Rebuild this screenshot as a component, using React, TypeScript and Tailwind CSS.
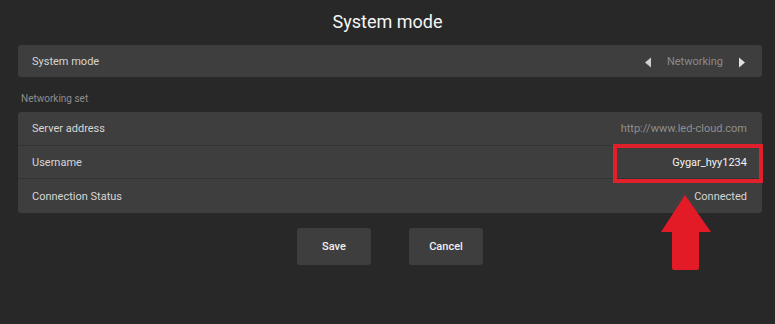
import React from 'react';

const rows = [
  { label: 'Server address', value: 'http://www.led-cloud.com', tone: 'text-[#8f8f8f]' },
  { label: 'Username', value: 'Gygar_hyy1234', tone: 'text-[#f2f2f2]', marked: true },
  { label: 'Connection Status', value: 'Connected', tone: 'text-[#d4d4d4]' },
];

export default function App() {
  return (
    <div
      className="relative w-[775px] h-[324px] bg-[#282828] overflow-hidden"
      style={{ fontFamily: 'Roboto, "Liberation Sans", sans-serif' }}
    >
      {/* Title */}
      <h1 className="pt-[9px] h-[45px] text-center text-[18px] leading-[26px] text-[#f5f5f5]">System mode</h1>

      <div className="pl-[18px] pr-[13px]">
        {/* Mode selector */}
        <div className="h-[32px] rounded-[3px] bg-[#3e3e3e] flex items-center justify-between pt-[2px] pl-[14px] pr-[16px] text-[11px]">
          <span className="text-[#d6d6d6]">System mode</span>
          <div className="flex items-center gap-[15px]">
            <svg width="8" height="11" viewBox="0 0 8 11">
              <path d="M7 0.5 L1 5.5 L7 10.5 Z" fill="#cfcfcf" />
            </svg>
            <span className="text-[#8a8a8a]">Networking</span>
            <svg width="8" height="11" viewBox="0 0 8 11">
              <path d="M1 0.5 L7 5.5 L1 10.5 Z" fill="#e0e0e0" />
            </svg>
          </div>
        </div>

        <div className="pl-[3px] pt-[14px] h-[35px] text-[10px] text-[#8d8d8d]">Networking set</div>

        {/* Networking rows */}
        <div className="rounded-[3px] bg-[#3e3e3e] flex flex-col">
          {rows.map((r, i) => (
            <div
              key={r.label}
              className={`relative h-[33.5px] flex items-center justify-between pt-[2px] pl-[14px] pr-[15px] text-[11px] ${
                i < rows.length - 1 ? 'border-b border-[#333333]' : ''
              }`}
            >
              <span className="text-[#d6d6d6]">{r.label}</span>
              <span className={r.tone}>{r.value}</span>
              {r.marked && (
                <div className="absolute right-[-1px] top-[-2px] w-[150px] h-[39px] border-[4px] border-[#e0202a]" />
              )}
            </div>
          ))}
        </div>

        {/* Buttons */}
        <div className="flex justify-center gap-[38px] pt-[15px]">
          <button className="w-[74px] h-[37px] pt-[3px] rounded-[3px] bg-[#3e3e3e] text-[11px] font-medium text-[#f0f0f0]">
            Save
          </button>
          <button className="w-[74px] h-[37px] pt-[3px] rounded-[3px] bg-[#3e3e3e] text-[11px] font-medium text-[#f0f0f0]">
            Cancel
          </button>
        </div>
      </div>

      {/* Red arrow annotation */}
      <svg className="absolute left-[660px] top-[194px]" width="52" height="77" viewBox="0 0 52 77">
        <path
          d="M25 1 L51 38 L39 38 L39 74 Q39 76 37 76 L14 76 Q12 76 12 74 L12 38 L1 38 Z"
          fill="#e31b26"
        />
      </svg>
    </div>
  );
}
